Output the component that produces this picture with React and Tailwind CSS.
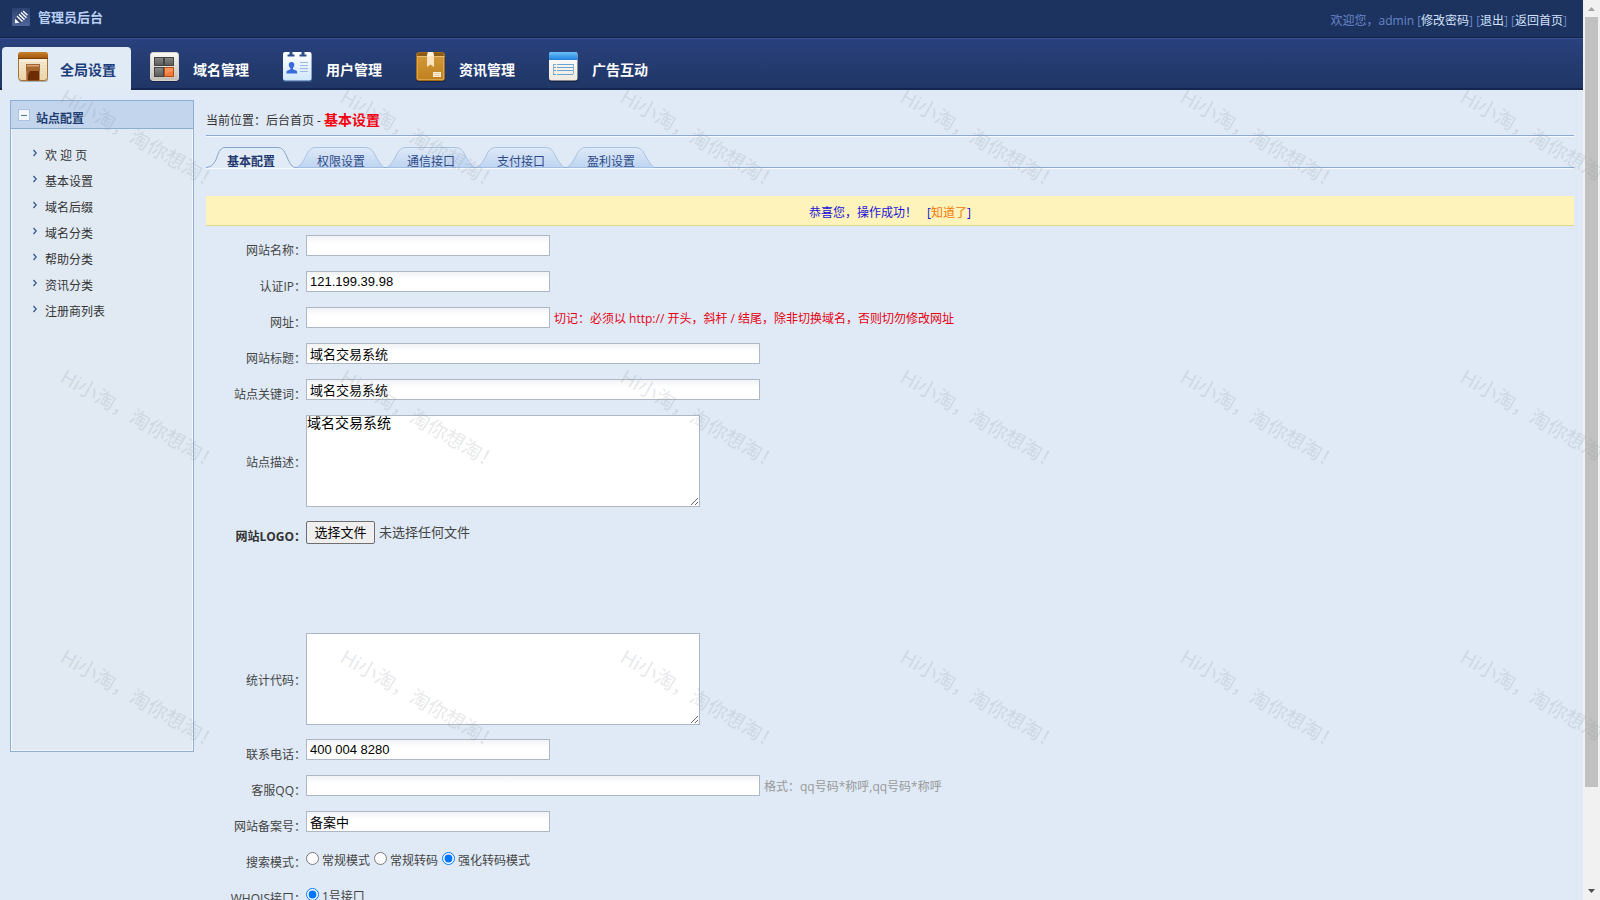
import React from "react";

function StoreIcon() {
  return (
    <svg width="32" height="32" viewBox="0 0 32 32" aria-hidden="true">
      <defs>
        <linearGradient id="store-roof" x1="0" y1="0" x2="0" y2="1">
          <stop offset="0" stopColor="#c9822c" />
          <stop offset="1" stopColor="#9c5208" />
        </linearGradient>
        <linearGradient id="store-wall" x1="0" y1="0" x2="0" y2="1">
          <stop offset="0" stopColor="#fdf8ec" />
          <stop offset="1" stopColor="#ead3a8" />
        </linearGradient>
      </defs>
      <rect x="2" y="3" width="29" height="28" rx="3" fill="#00000040" />
      <rect x="1.5" y="1.5" width="29" height="28" rx="3" fill="url(#store-wall)" stroke="#a8712e" />
      <path d="M1 8V4a3 3 0 0 1 3-3h24a3 3 0 0 1 3 3v4z" fill="url(#store-roof)" />
      <path d="M1 7.500h30" stroke="#7c3f05" />
      <path d="M3 12h26M3 15h26M3 18h26M3 21h26M3 24h26" stroke="#e3d3b2" strokeWidth="0.700" />
      <rect x="9" y="13" width="14" height="16.500" fill="#b9824f" />
      <rect x="9" y="13" width="14" height="7" fill="#a5672f" />
      <rect x="10" y="14" width="12" height="1.500" fill="#d6a878" />
      <rect x="10" y="20" width="12" height="9.500" fill="#6b2c06" />
      <path d="M10 20h3l-2 4v5.500h-1z" fill="#c08a58" opacity=".6" />
    </svg>
  );
}

function GridIcon() {
  return (
    <svg width="32" height="32" viewBox="0 0 32 32" aria-hidden="true">
      <defs>
        <linearGradient id="grid-plate" x1="0" y1="0" x2="0" y2="1">
          <stop offset="0" stopColor="#fbfaf7" />
          <stop offset="1" stopColor="#c5bfb5" />
        </linearGradient>
        <linearGradient id="grid-cell" x1="0" y1="0" x2="0" y2="1">
          <stop offset="0" stopColor="#888" />
          <stop offset="1" stopColor="#5a5a5a" />
        </linearGradient>
      </defs>
      <rect x="1" y="2" width="29" height="29" rx="3" fill="#00000055" />
      <rect x="1.500" y="1.500" width="28" height="28" rx="2.500" fill="url(#grid-plate)" stroke="#d8d4cc" />
      <rect x="5.500" y="6.500" width="9" height="8" fill="url(#grid-cell)" stroke="#444" />
      <rect x="15.500" y="6.500" width="9" height="8" fill="url(#grid-cell)" stroke="#444" />
      <rect x="5.500" y="16.500" width="9" height="9" fill="url(#grid-cell)" stroke="#444" />
      <rect x="15.500" y="16.500" width="9" height="9" fill="#ef7a38" stroke="#b8501a" />
      <path d="M16 17h8v3l-8 3z" fill="#ff9d63" opacity=".7" />
    </svg>
  );
}

function ContactIcon() {
  return (
    <svg width="32" height="32" viewBox="0 0 32 32" aria-hidden="true">
      <defs>
        <linearGradient id="contact-card" x1="0" y1="0" x2="0" y2="1">
          <stop offset="0" stopColor="#ffffff" />
          <stop offset="1" stopColor="#cfe6fb" />
        </linearGradient>
      </defs>
      <rect x="1" y="2" width="29" height="29" rx="2" fill="#5f9be055" />
      <rect x="1" y="1" width="28.500" height="28.500" rx="2" fill="url(#contact-card)" />
      <path d="M7.500 0.500h3v3h2v2h-7v-2h2zM19.500 0.500h3v3h2v2h-7v-2h2z" fill="#2d4c8c" />
      <path d="M9.500 11a2.800 2.800 0 0 1 2.800 2.900c0 1.500-.8 2.300-1.400 3v1.300l3.600 1.600c.6.400.7 1 .7 2.700H4.500c0-1.700.1-2.300.7-2.700l3.200-1.600v-1.300c-.9-.7-1.600-1.500-1.600-3A2.800 2.800 0 0 1 9.500 11z" fill="#3a6bdb" />
      <path d="M18 11.500h8M18 14.500h8M18 17.500h8M18 20.500h8" stroke="#9ab9e4" />
    </svg>
  );
}

function BoxIcon() {
  return (
    <svg width="32" height="32" viewBox="0 0 32 32" aria-hidden="true">
      <defs>
        <linearGradient id="box-body" x1="0" y1="0" x2="0" y2="1">
          <stop offset="0" stopColor="#d39b3f" />
          <stop offset="1" stopColor="#c0801c" />
        </linearGradient>
      </defs>
      <rect x="1" y="2" width="29" height="29" rx="3" fill="#00000050" />
      <rect x="1.500" y="1.500" width="28" height="28" rx="2.500" fill="url(#box-body)" stroke="#a86b15" />
      <path d="M3 2h25l1 3H2z" fill="#8a5c18" />
      <path d="M2 5.500h27.500" stroke="#e8be73" />
      <path d="M2.500 6v22.500h26V6" fill="none" stroke="#dfad58" strokeWidth=".8" />
      <path d="M13 1h5l1 5v10l-3.500-2.500L12 16V6z" fill="#f8e5bd" />
      <path d="M13 1h5l1 4h-7z" fill="#fdf3da" />
      <rect x="18" y="21" width="8" height="5" fill="#f7ead0" />
      <path d="M19.500 22.500h5M19.500 24.500h5" stroke="#d9c090" strokeWidth=".7" />
    </svg>
  );
}

function WindowIcon() {
  return (
    <svg width="32" height="32" viewBox="0 0 32 32" aria-hidden="true">
      <defs>
        <linearGradient id="window-bar" x1="0" y1="0" x2="0" y2="1">
          <stop offset="0" stopColor="#6cc0fa" />
          <stop offset="1" stopColor="#1f7fdc" />
        </linearGradient>
        <linearGradient id="window-body" x1="0" y1="0" x2="0" y2="1">
          <stop offset="0" stopColor="#ffffff" />
          <stop offset="1" stopColor="#efe9df" />
        </linearGradient>
      </defs>
      <rect x="1" y="2" width="29" height="29" rx="3" fill="#00000050" />
      <rect x="1" y="1" width="28.500" height="28.500" rx="2.500" fill="url(#window-body)" />
      <path d="M1 9V3.500A2.500 2.500 0 0 1 3.500 1H27a2.500 2.500 0 0 1 2.500 2.500V9z" fill="url(#window-bar)" />
      <path d="M5 13.500h3M5 16.500h3M5 19.500h3M5 23.500h3M9 13.500h16M9 16.500h16M9 19.500h16M9 23.500h16" stroke="#6ba3d0" />
      <path d="M5.500 13v10M25.500 13v10" stroke="#86b1d6" />
    </svg>
  );
}

function BrandIcon() {
  return (
    <svg width="18" height="18" viewBox="0 0 18 18" aria-hidden="true">
      <defs>
        <linearGradient id="brand-tile" x1="0" y1="0" x2="0" y2="1">
          <stop offset="0" stopColor="#2c4271" />
          <stop offset="1" stopColor="#50659a" />
        </linearGradient>
      </defs>
      <rect width="18" height="18" rx="1" fill="url(#brand-tile)" />
      <path d="M3 15l.5-5L11 3l5 4.500L8 15z" fill="#33466f" />
      <path d="M5 8.200l5.500 5.300M7 6.400l5.500 5.200M9 4.500l5.500 5.200M11 3l4.500 4.300" stroke="#f4f7fc" strokeWidth="1.500" />
      <path d="M3 10.500l4.500 4.300L3 15.300z" fill="#f4f7fc" />
    </svg>
  );
}

const MODULES = [
  { label: "全局设置", Icon: StoreIcon, active: true },
  { label: "域名管理", Icon: GridIcon },
  { label: "用户管理", Icon: ContactIcon },
  { label: "资讯管理", Icon: BoxIcon },
  { label: "广告互动", Icon: WindowIcon },
];

const MENU = ["欢 迎 页", "基本设置", "域名后缀", "域名分类", "帮助分类", "资讯分类", "注册商列表"];
const TABS = ["基本配置", "权限设置", "通信接口", "支付接口", "盈利设置"];

function Header() {
  return (
    <header>
      <div className="flex h-[38px] items-center justify-between border-b border-[#14234a] bg-[#1c325f] pr-4 pl-3">
        <div className="flex items-center gap-2 pb-1">
          <BrandIcon />
          <h1 className="text-[13px] leading-5 font-bold text-[#b9d0f5]">管理员后台</h1>
        </div>
        <p className="pt-1 leading-5 text-[#6a87c8]">
          欢迎您，admin [<a href="#password" className="text-[#d3e2fb]">修改密码</a>] [
          <a href="#logout" className="text-[#d3e2fb]">退出</a>] [
          <a href="#home" className="text-[#d3e2fb]">返回首页</a>]
        </p>
      </div>
      <nav className="flex h-[52px] items-end border-t border-b-2 border-t-[#38518d] border-b-[#15254d] bg-linear-to-b from-[#29417d] to-[#203666] pl-[2px]">
        {MODULES.map(({ label, Icon, active }) => (
          <a
            key={label}
            href="#module"
            className={
              active
                ? "-mb-[2px] mr-1 flex h-[43px] w-[129px] items-start gap-[11px] rounded-t-sm bg-[#e1ebf6] pt-1 pl-[15px] text-sm font-bold text-[#1d3e7c]"
                : "-mb-[2px] flex h-[43px] w-[133px] items-start gap-3 pt-1 pl-[14px] text-sm font-bold text-white"
            }
          >
            <Icon />
            <span className="pt-[9px] leading-5">{label}</span>
          </a>
        ))}
      </nav>
    </header>
  );
}

function Sidebar() {
  return (
    <aside className="h-[652px] w-[184px] shrink-0 border border-[#8faed3] bg-[#e1eaf3] shadow-[inset_0_0_0_1px_#f4f8fc]">
      <div className="flex h-7 items-start gap-[6px] border-b border-[#8faed3] bg-[#c2d5ed] pl-[7px]">
        <button type="button" aria-label="收起" className="mt-2 flex h-3 w-3 items-center justify-center border border-[#a9c3e4] bg-[#f4f8fd]">
          <span className="h-px w-[6px] bg-[#52719f]" />
        </button>
        <h2 className="pt-2 leading-5 font-bold text-[#1f3d70]">站点配置</h2>
      </div>
      <ul className="pt-[14px]">
        {MENU.map((item) => (
          <li key={item} className="h-[26px]">
            <a href="#menu" className="flex items-start gap-2 pl-[22px] text-[#333]">
              <svg width="4" height="8" viewBox="0 0 4 8" className="mt-[6px]" aria-hidden="true">
                <path d="M0.500 1L3.200 4L0.500 7" fill="none" stroke="#35578c" strokeWidth="1.300" />
              </svg>
              <span className="leading-[26px]">{item}</span>
            </a>
          </li>
        ))}
      </ul>
    </aside>
  );
}

function TabStrip() {
  return (
    <div className="flex pt-[11px] shadow-[inset_0_-1px_0_#8dabd2,0_1px_0_#f6f9fd]">
      {TABS.map((tab, i) => (
        <button key={tab} type="button" className="relative h-[21px] w-[90px]">
          <svg width="90" height="21" viewBox="0 0 90 21" className="absolute inset-0" aria-hidden="true">
            <defs>
              <linearGradient id="tab-fill" x1="0" y1="0" x2="0" y2="1">
                <stop offset="0" stopColor="#dfe9f7" />
                <stop offset="1" stopColor="#bdd4f2" />
              </linearGradient>
            </defs>
            {i === 0 ? (
              <path
                d="M0 20.500C6 20 9 16 11 10C13 4 15 .5 19 .5H71C76 .5 78 3 81 10C84 17 86 20.500 90 20.500V22H0z"
                fill="#e1ebf6"
                stroke="#86a5cf"
              />
            ) : (
              <path
                d="M1 20.500C5 18 8 13 10 9C12.500 3.500 15 .5 20 .5H69C74 .5 77 3.500 79 8C81.500 13 85 18 88 20.500"
                fill="url(#tab-fill)"
                stroke="#a9c1e0"
              />
            )}
          </svg>
          <span
            className={
              i === 0
                ? "relative block pt-[7px] leading-4 font-bold text-[#22386e]"
                : "relative block pt-[7px] leading-4 text-[#2f4a86]"
            }
          >
            {tab}
          </span>
        </button>
      ))}
    </div>
  );
}

function Row({ id, label, strong, children }) {
  return (
    <div className="flex py-[7px]">
      <label
        htmlFor={id}
        className={
          strong
            ? "h-[22px] w-[100px] pt-[7px] text-right leading-[18px] font-bold text-[#333]"
            : "h-[22px] w-[100px] pt-[7px] text-right leading-[18px] text-[#444]"
        }
      >
        {label}：
      </label>
      <div className="flex h-[22px] items-center gap-1">{children}</div>
    </div>
  );
}

function TextField({ id, value, wide }) {
  return (
    <input
      id={id}
      type="text"
      defaultValue={value}
      className={
        wide
          ? "mb-px h-[21px] w-[454px] border border-[#afb7c6] bg-linear-to-b from-[#f1f3f5] to-white to-40% px-[3px] text-[13px] text-black"
          : "mb-px h-[21px] w-[244px] border border-[#afb7c6] bg-linear-to-b from-[#f1f3f5] to-white to-40% px-[3px] text-[13px] text-black"
      }
    />
  );
}

function AreaRow({ id, label, value }) {
  return (
    <div className="flex items-center py-[7px]">
      <label htmlFor={id} className="w-[100px] pt-1 text-right leading-[18px] text-[#444]">
        {label}：
      </label>
      <textarea
        id={id}
        defaultValue={value}
        className="block h-[92px] w-[394px] resize border border-[#afb7c6] bg-white text-sm leading-[14px] text-black"
      />
    </div>
  );
}

function Radio({ name, label, checked }) {
  return (
    <label className="flex items-start gap-[3px] pt-[6px] text-[#444]">
      <input type="radio" name={name} defaultChecked={checked} className="h-[13px] w-[13px]" />
      <span className="leading-[18px]">{label}</span>
    </label>
  );
}

function SettingsForm() {
  return (
    <form className="pt-[2px]">
      <Row id="site-name" label="网站名称">
        <TextField id="site-name" value="" />
      </Row>
      <Row id="auth-ip" label="认证IP">
        <TextField id="auth-ip" value="121.199.39.98" />
      </Row>
      <Row id="site-url" label="网址">
        <TextField id="site-url" value="" />
        <span className="pt-px whitespace-nowrap text-[#e60012]">
          切记：必须以 http:// 开头，斜杆 / 结尾，除非切换域名，否则切勿修改网址
        </span>
      </Row>
      <Row id="site-title" label="网站标题">
        <TextField id="site-title" value="域名交易系统" wide />
      </Row>
      <Row id="site-keys" label="站点关键词">
        <TextField id="site-keys" value="域名交易系统" wide />
      </Row>
      <AreaRow id="site-desc" label="站点描述" value="域名交易系统" />
      <div className="pb-[76px]">
        <Row id="site-logo" label="网站LOGO" strong>
          <button
            id="site-logo"
            type="button"
            className="h-[23px] w-[69px] rounded-xs border border-[#6f6f6f] bg-[#efefef] text-[13px] leading-5 text-black"
          >
            选择文件
          </button>
          <span className="pt-px text-[13px] text-[#444]">未选择任何文件</span>
        </Row>
      </div>
      <AreaRow id="stat-code" label="统计代码" value="" />
      <Row id="phone" label="联系电话">
        <TextField id="phone" value="400 004 8280" />
      </Row>
      <Row id="qq" label="客服QQ">
        <TextField id="qq" value="" wide />
        <span className="pt-[2px] whitespace-nowrap text-[#999]">格式：qq号码*称呼,qq号码*称呼</span>
      </Row>
      <Row id="icp" label="网站备案号">
        <TextField id="icp" value="备案中" />
      </Row>
      <div role="radiogroup" aria-label="搜索模式">
        <Row label="搜索模式">
          <Radio name="search" label="常规模式" />
          <Radio name="search" label="常规转码" />
          <Radio name="search" label="强化转码模式" checked />
        </Row>
      </div>
      <div role="radiogroup" aria-label="WHOIS接口">
        <Row label="WHOIS接口">
          <Radio name="whois" label="1号接口" checked />
        </Row>
      </div>
    </form>
  );
}

function Watermark() {
  return (
    <div className="pointer-events-none absolute inset-0 overflow-hidden" aria-hidden="true">
      <div className="grid auto-rows-[280px] grid-cols-[repeat(6,280px)]">
        {Array.from({ length: 18 }, (_, i) => (
          <div key={i} className="flex items-center justify-center">
            <span className="rotate-30 text-[20px] whitespace-nowrap text-[#808890]/20">Hi小淘，淘你想淘！</span>
          </div>
        ))}
      </div>
    </div>
  );
}

function ScrollRail() {
  return (
    <div className="flex w-[17px] shrink-0 flex-col items-center bg-[#f1f1f1]" aria-hidden="true">
      <svg width="17" height="17" viewBox="0 0 17 17">
        <path d="M5 11L8.500 7L12 11z" fill="#a3a3a3" />
      </svg>
      <div className="flex w-full flex-1 flex-col items-center">
        <div className="h-8/9 w-[13px] bg-[#c1c1c1]" />
      </div>
      <svg width="17" height="17" viewBox="0 0 17 17">
        <path d="M5 6L8.500 10L12 6z" fill="#505050" />
      </svg>
    </div>
  );
}

export default function App() {
  return (
    <div className="relative flex h-screen overflow-hidden bg-[#dfeaf6] font-['Open_Sans','Noto_Sans_CJK_SC',sans-serif] text-xs [&_input]:font-['Liberation_Sans','Noto_Sans_CJK_SC',sans-serif]">
      <div className="min-w-0 flex-1 overflow-hidden">
        <Header />
        <div className="flex gap-3 pt-[10px] pr-[9px] pl-[10px]">
          <Sidebar />
          <main className="min-w-0 flex-1">
            <div className="flex h-[36px] items-center border-b border-[#8dabd2] pt-[6px] text-[#333] shadow-[0_1px_0_#f6f9fd]">
              <p className="leading-5">
                当前位置：后台首页 - <strong className="text-sm leading-5 text-[#f5000f]">基本设置</strong>
              </p>
            </div>
            <TabStrip />
            <div className="mt-7 flex h-[30px] items-center justify-center gap-[10px] border-b border-[#e2d78c] bg-[#fef3ba] pt-1 text-[#1a12d8]">
              <span>恭喜您，操作成功！</span>
              <span>
                [<a href="#dismiss" className="text-[#f0760c]">知道了</a>]
              </span>
            </div>
            <SettingsForm />
          </main>
        </div>
      </div>
      <ScrollRail />
      <Watermark />
    </div>
  );
}
